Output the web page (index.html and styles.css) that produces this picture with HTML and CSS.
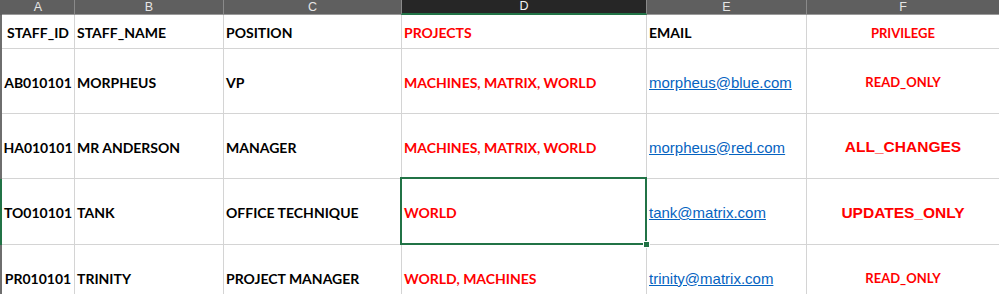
FILE: index.html
```html
<!DOCTYPE html>
<html>
<head>
<meta charset="utf-8">
<link rel="stylesheet" href="styles.css">
</head>
<body>
<div class="sheet">
  <div class="heads">
    <div class="ch">A</div>
    <div class="ch">B</div>
    <div class="ch">C</div>
    <div class="ch sel">D</div>
    <div class="ch">E</div>
    <div class="ch">F</div>
  </div>
  <div class="grid">
    <div class="rowmark"></div>
    <div class="c ctr b">STAFF_ID</div>
    <div class="c b">STAFF_NAME</div>
    <div class="c b">POSITION</div>
    <div class="c b red">PROJECTS</div>
    <div class="c b">EMAIL</div>
    <div class="c ctr b red small">PRIVILEGE</div>

    <div class="rowmark"></div>
    <div class="c ctr b">AB010101</div>
    <div class="c b">MORPHEUS</div>
    <div class="c b">VP</div>
    <div class="c b red">MACHINES, MATRIX, WORLD</div>
    <div class="c"><a class="mail">morpheus@blue.com</a></div>
    <div class="c ctr b red small">READ_ONLY</div>

    <div class="rowmark"></div>
    <div class="c ctr b">HA010101</div>
    <div class="c b">MR ANDERSON</div>
    <div class="c b">MANAGER</div>
    <div class="c b red">MACHINES, MATRIX, WORLD</div>
    <div class="c"><a class="mail">morpheus@red.com</a></div>
    <div class="c ctr arialb red">ALL_CHANGES</div>

    <div class="rowmark on"></div>
    <div class="c ctr b">TO010101</div>
    <div class="c b">TANK</div>
    <div class="c b">OFFICE TECHNIQUE</div>
    <div class="c b red active">WORLD<span class="handle"></span></div>
    <div class="c"><a class="mail">tank@matrix.com</a></div>
    <div class="c ctr arialb red">UPDATES_ONLY</div>

    <div class="rowmark"></div>
    <div class="c ctr b">PR010101</div>
    <div class="c b">TRINITY</div>
    <div class="c b">PROJECT MANAGER</div>
    <div class="c b red">WORLD, MACHINES</div>
    <div class="c"><a class="mail">trinity@matrix.com</a></div>
    <div class="c ctr b red small">READ_ONLY</div>
  </div>
</div>
</body>
</html>
```
FILE: styles.css
```css
html, body {
  margin: 0;
  padding: 0;
  background: #ffffff;
  overflow: hidden;
}
.sheet {
  width: 999px;
  height: 294px;
  overflow: hidden;
}
.heads {
  display: grid;
  grid-template-columns: 2px 73px 149px 178px 245px 160px 193px;
  height: 15px;
  background: #5f5f5f;
}
.heads::before {
  content: "";
  background: #5f5f5f;
}
.ch {
  font-family: "Liberation Sans", Arial, sans-serif;
  font-size: 12.5px;
  line-height: 14px;
  color: #e6e6e6;
  text-align: center;
  border-right: 1px solid #8a8a8a;
  border-bottom: 1px solid #9a9a9a;
  box-sizing: border-box;
}
.ch.sel {
  background: #262626;
  border-bottom: 2px solid #217346;
  border-left: 1px solid #8a8a8a;
  margin-left: -1px;
  color: #f2f2f2;
  line-height: 13px;
}
.grid {
  display: grid;
  grid-template-columns: 2px 73px 149px 178px 245px 160px 193px;
  grid-template-rows: 34px 65px 65px 66px 65px;
}
.rowmark {
  background: #6e6e6e;
}
.rowmark.on {
  background: #217346;
}
.c {
  position: relative;
  box-sizing: border-box;
  border-right: 1px solid #d4d4d4;
  border-bottom: 1px solid #d4d4d4;
  display: flex;
  align-items: center;
  padding-left: 2px;
  padding-top: 2px;
  white-space: nowrap;
  overflow: visible;
  font-family: "Lato", "Liberation Sans", sans-serif;
  font-size: 14px;
  color: #000;
}
.c.ctr {
  justify-content: center;
  padding-left: 0;
}
.b {
  font-weight: 700;
}
.red {
  color: #ff0000;
}
.small {
  font-size: 13px;
}
.arialb {
  font-family: "Liberation Sans", Arial, sans-serif;
  font-weight: 700;
  font-size: 15.5px;
}
.mail {
  font-family: "Liberation Sans", Arial, sans-serif;
  font-size: 15px;
  color: #0563c1;
  text-decoration: underline;
}
.active::after {
  content: "";
  position: absolute;
  left: -2px;
  top: -2px;
  right: -1px;
  bottom: -1px;
  border: 2px solid #217346;
  pointer-events: none;
}
.handle {
  position: absolute;
  right: -4px;
  bottom: -4px;
  width: 5px;
  height: 5px;
  background: #217346;
  border: 1px solid #ffffff;
  z-index: 2;
}
```
